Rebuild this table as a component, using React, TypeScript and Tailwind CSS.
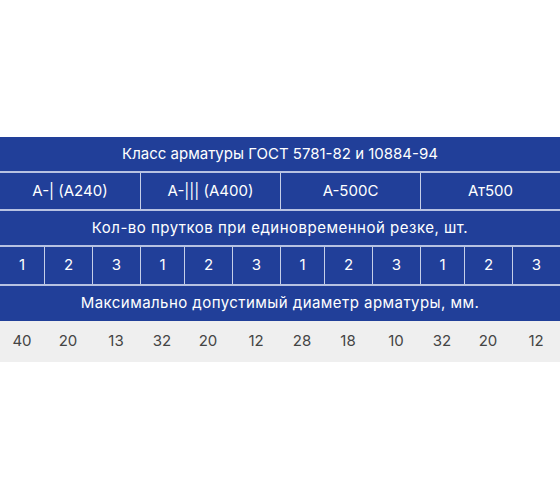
const COLS = "grid grid-cols-[44px_48px_48px_44px_48px_48px_44px_48px_48px_44px_48px_48px]"

const classes = ["А-| (А240)", "А-||| (А400)", "А-500С", "Ат500"]
const counts = [1, 2, 3, 1, 2, 3, 1, 2, 3, 1, 2, 3]
const diameters = [40, 20, 13, 32, 20, 12, 28, 18, 10, 32, 20, 12]

function Band({ children, className = "" }: { children: React.ReactNode; className?: string }) {
  return (
    <div
      className={`h-[36px] flex items-center justify-center bg-[#213f99] text-white border-b-2 border-[#b7c2e2] ${className}`}
    >
      {children}
    </div>
  )
}

export default function App() {
  return (
    <div className="w-[560px] h-[504px] bg-white pt-[137px] font-['Inter',sans-serif] text-[15px]">
      <Band>Класс арматуры ГОСТ 5781-82 и 10884-94</Band>

      <div className="grid grid-cols-4 bg-[#213f99] text-white border-b-2 border-[#b7c2e2]">
        {classes.map((c, i) => (
          <div
            key={c}
            className={`h-[36px] flex items-center justify-center ${i > 0 ? "border-l border-[#c6cfe8]" : ""}`}
          >
            {c}
          </div>
        ))}
      </div>

      <Band className="tracking-[0.5px]">Кол-во прутков при единовременной резке, шт.</Band>

      <div className={`${COLS} bg-[#213f99] text-white border-b-2 border-[#b7c2e2]`}>
        {counts.map((n, i) => (
          <div
            key={i}
            className={`h-[37px] flex items-center justify-center ${i > 0 ? "border-l border-[#c6cfe8]" : ""}`}
          >
            {n}
          </div>
        ))}
      </div>

      <div className="h-[35px] flex items-center justify-center bg-[#213f99] text-white tracking-[0.45px]">
        Максимально допустимый диаметр арматуры, мм.
      </div>

      <div className={`${COLS} bg-[#efefef] text-[#444444]`}>
        {diameters.map((d, i) => (
          <div key={i} className="h-[41px] flex items-center justify-center">
            {d}
          </div>
        ))}
      </div>
    </div>
  )
}
